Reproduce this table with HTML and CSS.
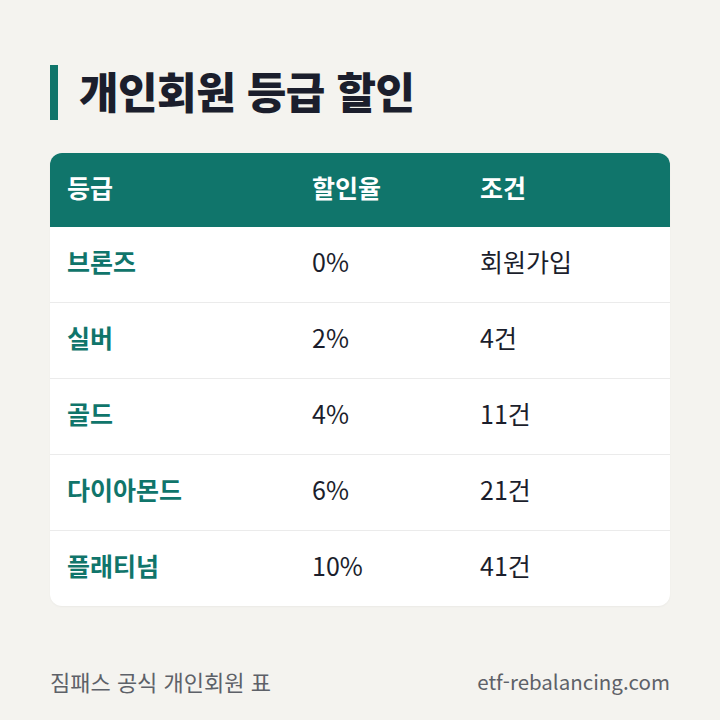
FILE: index.html
```html
<!DOCTYPE html>
<html lang="ko">
<head>
<meta charset="utf-8">
<link rel="stylesheet" href="styles.css">
</head>
<body>
<div class="page">
  <h1 class="title"><span class="bar"></span><span class="title-text">개인회원 등급 할인</span></h1>
  <div class="table">
    <div class="row head"><div>등급</div><div>할인율</div><div>조건</div></div>
    <div class="row"><div class="grade">브론즈</div><div>0%</div><div>회원가입</div></div>
    <div class="row"><div class="grade">실버</div><div>2%</div><div>4건</div></div>
    <div class="row"><div class="grade">골드</div><div>4%</div><div>11건</div></div>
    <div class="row"><div class="grade">다이아몬드</div><div>6%</div><div>21건</div></div>
    <div class="row last"><div class="grade">플래티넘</div><div>10%</div><div>41건</div></div>
  </div>
  <div class="footer"><span class="src">짐패스 공식 개인회원 표</span><span class="site">etf-rebalancing.com</span></div>
</div>
</body>
</html>
```
FILE: styles.css
```css
html, body { margin: 0; padding: 0; }
body {
  background: #f4f3ef;
  font-family: "Noto Sans CJK KR", "Noto Sans", sans-serif;
  width: 720px;
  height: 720px;
  overflow: hidden;
}
.page { padding: 65px 50px 0 50px; }
.title {
  display: flex;
  align-items: center;
  gap: 21px;
  margin: 0;
  height: 55px;
  font-size: 43px;
  font-weight: 900;
  color: #1b1e2c;
  letter-spacing: -0.5px;
}
.title-text { line-height: 1; padding-bottom: 4px; }
.bar { width: 8px; height: 55px; background: #10756b; flex: none; }
.table {
  margin-top: 33px;
  background: #fff;
  border-radius: 12px;
  overflow: hidden;
  box-shadow: 0 1px 2px rgba(0,0,0,0.04);
}
.row {
  display: grid;
  grid-template-columns: 245px 168px 1fr;
  padding-left: 17px;
  height: 75px;
  align-items: center;
  font-size: 25px;
  line-height: 1;
  color: #1b1e2c;
  border-bottom: 1px solid #ebebeb;
}
.row > div { padding-bottom: 6px; }
.row.last { border-bottom: none; }
.row.head {
  background: #10756b;
  color: #fff;
  font-weight: 700;
  height: 74px;
  border-bottom: none;
}
.grade { color: #10756b; font-weight: 700; }
.footer {
  margin-top: 64px;
  display: flex;
  justify-content: space-between;
  align-items: center;
  color: #5d6168;
  line-height: 1;
}
.src { font-size: 22px; }
.site { font-size: 20.5px; }
```
